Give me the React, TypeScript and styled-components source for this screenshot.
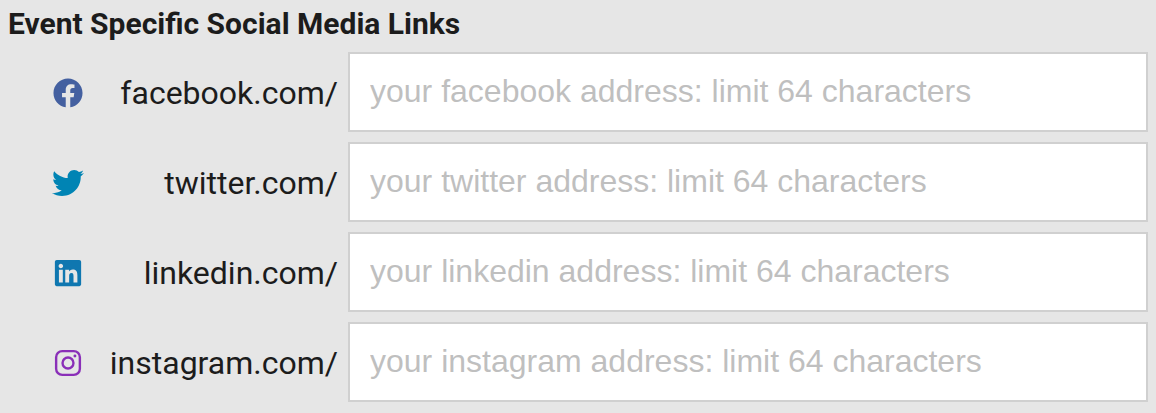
import React from "react";
import styled, { createGlobalStyle } from "styled-components";
import { FaFacebook, FaTwitter, FaLinkedin } from "react-icons/fa";

const GlobalStyle = createGlobalStyle`
  body { margin: 0; background: #e6e6e6; }
  *, *::before, *::after { box-sizing: border-box; }
`;

const Section = styled.section`
  height: 413px;
  padding: 4px 8px 0;
  overflow: hidden;
  background: #e6e6e6;
  color: #1c1c1c;
  font-family: Roboto, sans-serif;
`;

const Heading = styled.h2`
  margin: 0 0 8px;
  height: 40px;
  font-size: 30px;
  line-height: 40px;
  font-weight: 700;
`;

const Rows = styled.div`
  display: flex;
  flex-direction: column;
  gap: 10px;
`;

const Row = styled.div`
  display: grid;
  grid-template-columns: 76px 1fr 800px;
  align-items: center;
  height: 80px;
`;

const IconCell = styled.div<{ $color: string }>`
  display: flex;
  justify-content: center;
  width: 32px;
  margin-left: 44px;
  padding-top: 2px;
  color: ${(p) => p.$color};

  svg { flex: none; }
`;

const Label = styled.label`
  padding-top: 2px;
  padding-right: 10px;
  text-align: right;
  white-space: nowrap;
  font-size: 32px;
  line-height: 40px;
`;

const Input = styled.input`
  width: 100%;
  height: 80px;
  margin: 0;
  padding: 0 20px 2px;
  border: 2px solid #d0d0d0;
  border-radius: 0;
  background: #fff;
  font: 32px/36px "Liberation Sans", Arial, sans-serif;
  &::placeholder { color: #bfbfbf; opacity: 1; }
`;

function Instagram({ size }: { size: number }) {
  return (
    <svg width={size} height={size} viewBox="0 0 24 24" fill="none" stroke="currentColor" strokeWidth="1.8">
      <rect x="3.1" y="3.1" width="17.8" height="17.8" rx="4.6" />
      <circle cx="12" cy="12" r="4.1" />
      <circle cx="17.2" cy="6.8" r="1.1" fill="currentColor" stroke="none" />
    </svg>
  );
}

const links = [
  { name: "facebook", color: "#4460a0", Icon: FaFacebook, size: 30 },
  { name: "twitter", color: "#0084b4", Icon: FaTwitter, size: 32 },
  { name: "linkedin", color: "#0f77b0", Icon: FaLinkedin, size: 30 },
  { name: "instagram", color: "#8a2fb8", Icon: Instagram, size: 32 },
];

export default function App() {
  return (
    <Section>
      <GlobalStyle />
      <Heading>Event Specific Social Media Links</Heading>
      <Rows>
        {links.map(({ name, color, Icon, size }) => (
          <Row key={name}>
            <IconCell $color={color}><Icon size={size} /></IconCell>
            <Label htmlFor={name}>{name}.com/</Label>
            <Input id={name} placeholder={`your ${name} address: limit 64 characters`} />
          </Row>
        ))}
      </Rows>
    </Section>
  );
}
